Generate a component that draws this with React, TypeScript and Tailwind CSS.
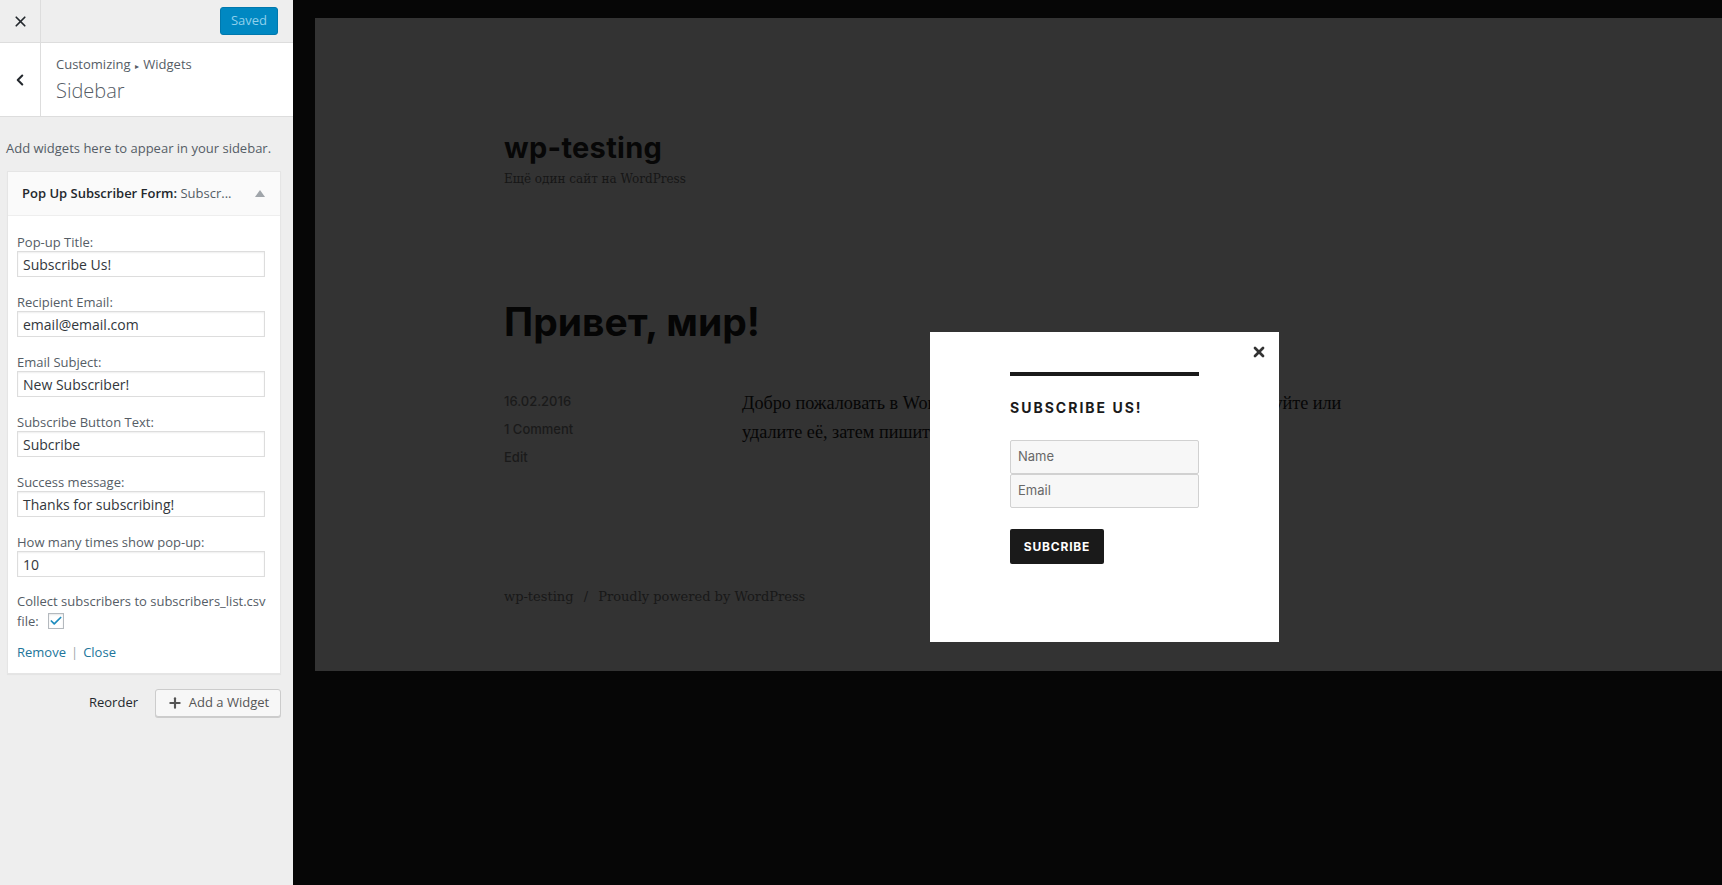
import { Check, ChevronLeft, Plus, X } from 'lucide-react';

const fields = [
  { label: 'Pop-up Title:', value: 'Subscribe Us!' },
  { label: 'Recipient Email:', value: 'email@email.com' },
  { label: 'Email Subject:', value: 'New Subscriber!' },
  { label: 'Subscribe Button Text:', value: 'Subcribe' },
  { label: 'Success message:', value: 'Thanks for subscribing!' },
  { label: 'How many times show pop-up:', value: '10' },
];

function Sidebar() {
  return (
    <div className="w-[293px] shrink-0 h-[885px] bg-[#eeeeee] text-[#555d66]" style={{ fontFamily: '"Open Sans", "Noto Sans", sans-serif' }}>
      <div className="h-[43px] flex items-center border-b border-[#dddddd]">
        <div className="w-[41px] h-full flex items-center justify-center border-r border-[#dddddd] text-[#23282d]">
          <X size={17} strokeWidth={2.4} />
        </div>
        <div className="flex-1" />
        <button className="mr-[15px] h-[28px] w-[58px] rounded-[3px] bg-[#0088c2] text-[#8fd0ec] text-[13px] border border-[#0078ad]">Saved</button>
      </div>
      <div className="h-[74px] flex bg-white border-b border-[#dddddd]">
        <div className="w-[41px] h-full flex items-center justify-center border-r border-[#dddddd] text-[#23282d]">
          <ChevronLeft size={18} strokeWidth={2.8} />
        </div>
        <div className="pl-[15px] pt-[11px]">
          <div className="text-[13px] leading-[20px] text-[#555d66]">Customizing <span className="text-[8px] align-middle mx-[1px]">▸</span> Widgets</div>
          <div className="text-[20px] leading-[28px] font-light text-[#555d66] mt-[1px]">Sidebar</div>
        </div>
      </div>
      <p className="px-[6px] pt-[22px] pb-[14px] text-[13px] leading-[18px] text-[#555d66]">Add widgets here to appear in your sidebar.</p>
      <div className="ml-[7px] w-[274px] border border-[#e5e5e5] bg-white shadow-[0_1px_1px_rgba(0,0,0,0.04)]">
        <div className="h-[44px] bg-[#fafafa] border-b border-[#eeeeee] flex items-center pl-[14px] pr-[15px]">
          <div className="flex-1 text-[13px] text-[#23282d] whitespace-nowrap">
            <span className="font-semibold">Pop Up Subscriber Form:</span> <span className="text-[#555d66]">Subscr...</span>
          </div>
          <svg width="10" height="7" viewBox="0 0 10 7"><path d="M0 7 L5 0 L10 7 Z" fill="#a0a5aa" /></svg>
        </div>
        <div className="px-[9px] pt-[17px] pb-[12px]">
          {fields.map((f) => (
            <div key={f.label} className="mb-[16px]">
              <div className="text-[13px] leading-[18px]">{f.label}</div>
              <div className="h-[26px] w-[248px] border border-[#dddddd] shadow-[inset_0_1px_2px_rgba(0,0,0,0.07)] px-[5px] flex items-center text-[14px] text-[#32373c]">{f.value}</div>
            </div>
          ))}
          <div className="-mt-[2px] text-[13px] leading-[20px]">Collect subscribers to subscribers_list.csv</div>
          <div className="text-[13px] leading-[20px] flex items-center">
            file:
            <span className="ml-[9px] w-[16px] h-[16px] border border-[#b4b9be] bg-white flex items-center justify-center text-[#1e8cbe] shadow-[inset_0_1px_2px_rgba(0,0,0,0.1)]">
              <Check size={14} strokeWidth={3} />
            </span>
          </div>
          <div className="mt-[12px] text-[13px] leading-[18px]">
            <span className="text-[#21759b]">Remove</span>
            <span className="text-[#a0a5aa] mx-[5px]">|</span>
            <span className="text-[#21759b]">Close</span>
          </div>
        </div>
      </div>
      <div className="flex items-center justify-end w-[281px] mt-[15px] gap-[17px]">
        <span className="text-[13px] text-[#23282d]">Reorder</span>
        <button className="h-[28px] w-[126px] rounded-[3px] border border-[#cccccc] bg-[#f7f7f7] shadow-[0_1px_0_#cccccc] flex items-center justify-center gap-[6px] text-[13px] text-[#555]">
          <Plus size={16} strokeWidth={3.2} className="text-[#555]" />
          Add a Widget
        </button>
      </div>
    </div>
  );
}

function Popup() {
  return (
    <div className="absolute left-[615px] top-[314px] w-[349px] h-[310px] bg-white" style={{ fontFamily: 'Inter, "Noto Sans", sans-serif' }}>
      <div className="absolute right-[12px] top-[12px] text-[#333]">
        <X size={16} strokeWidth={4} />
      </div>
      <div className="ml-[80px] mt-[40px] w-[189px]">
        <div className="h-[4px] bg-[#1a1a1a]" />
        <h3 className="mt-[22px] text-[14px] leading-[20px] font-bold tracking-[2px] text-[#1a1a1a]">SUBSCRIBE US!</h3>
        <div className="mt-[22px] h-[34px] border border-[#d1d1d1] rounded-[2px] bg-[#f7f7f7] flex items-center px-[7px] text-[13px] text-[#686868]">Name</div>
        <div className="h-[34px] border border-[#d1d1d1] rounded-[2px] bg-[#f7f7f7] flex items-center px-[7px] text-[13px] text-[#686868]">Email</div>
        <button className="mt-[21px] h-[35px] w-[94px] rounded-[2px] bg-[#1a1a1a] text-white text-[12px] font-bold tracking-[0.8px]">SUBCRIBE</button>
      </div>
    </div>
  );
}

function Preview() {
  return (
    <div className="flex-1 h-[885px] bg-[#060606] pl-[22px] pt-[18px]">
      <div className="relative h-[653px] bg-[#333333] pl-[189px] pt-[112px]">
        <div className="text-[29px] leading-[36px] font-bold text-[#070707] tracking-[0.3px]" style={{ fontFamily: 'Inter, "Noto Sans", sans-serif' }}>wp-testing</div>
        <div className="mt-[3px] text-[12px] leading-[20px] text-[#161616]" style={{ fontFamily: '"DejaVu Serif", "Liberation Serif", serif' }}>Ещё один сайт на WordPress</div>
        <h1 className="mt-[109px] text-[39px] leading-[48px] font-bold text-[#050505]" style={{ fontFamily: 'Inter, "Noto Sans", sans-serif' }}>Привет, мир!</h1>
        <div className="mt-[41px] flex">
          <div className="w-[238px] text-[13px] leading-[28px] font-medium text-[#1a1a1a]" style={{ fontFamily: 'Inter, "Noto Sans", sans-serif' }}>
            <div>16.02.2016</div>
            <div>1 Comment</div>
            <div>Edit</div>
          </div>
          <p className="w-[620px] text-[18.2px] leading-[29px] text-[#060606] mt-[2px]" style={{ fontFamily: '"Liberation Serif", "DejaVu Serif", serif' }}>
            Добро пожаловать в WordPress. Это ваша первая запись. Отредактируйте или удалите её, затем пишите!
          </p>
        </div>
        <div className="mt-[116px] text-[13px] text-[#181818]" style={{ fontFamily: '"DejaVu Serif", "Liberation Serif", serif' }}>
          wp-testing <span className="mx-[6px]">/</span> Proudly powered by WordPress
        </div>
        <Popup />
      </div>
    </div>
  );
}

export default function App() {
  return (
    <div className="flex w-[1722px] h-[885px] overflow-hidden">
      <Sidebar />
      <Preview />
    </div>
  );
}
